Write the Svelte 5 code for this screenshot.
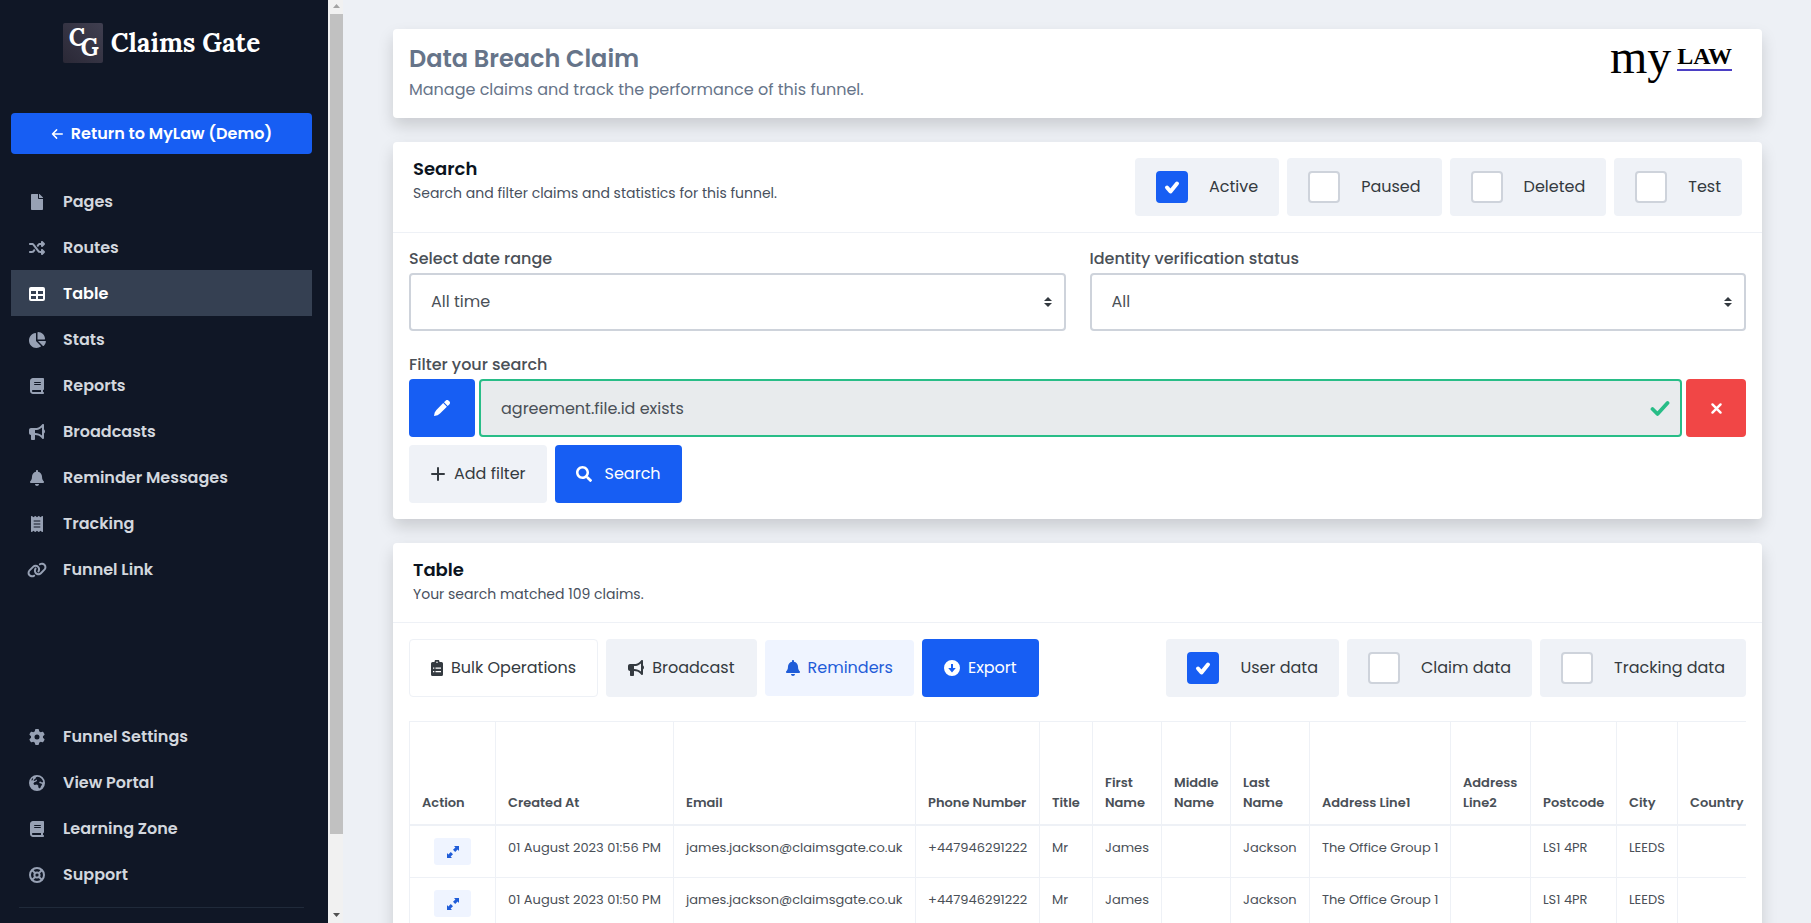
<script lang="ts">
  type Icon = { box: string; fill?: string; line?: string; width?: number };

  const icons: Record<string, Icon> = {
    file: { box: '0 0 384 512', fill: 'M224 136V0H24C10.7 0 0 10.7 0 24v464c0 13.3 10.7 24 24 24h336c13.3 0 24-10.7 24-24V160H248c-13.2 0-24-10.8-24-24zm160-14.1v6.1H256V0h6.1c6.4 0 12.5 2.5 17 7l97.9 98c4.5 4.5 7 10.6 7 16.9z' },
    shuffle: { box: '0 0 512 512', fill: 'M403.8 34.4c12-5 25.7-2.2 34.9 6.9l64 64c6 6 9.4 14.1 9.4 22.6s-3.4 16.6-9.4 22.6l-64 64c-9.2 9.2-22.9 11.9-34.9 6.9s-19.8-16.6-19.8-29.6V160H352c-10.1 0-19.6 4.7-25.6 12.8L284 229.3 244 176l31.2-41.6C293.3 110.2 321.8 96 352 96h32V64c0-12.9 7.8-24.6 19.8-29.6zM164 282.7L204 336l-31.2 41.6C154.7 401.8 126.2 416 96 416H32c-17.7 0-32-14.3-32-32s14.3-32 32-32H96c10.1 0 19.6-4.7 25.6-12.8L164 282.7zm274.6 188c-9.2 9.2-22.9 11.9-34.9 6.9s-19.8-16.6-19.8-29.6V416H352c-30.2 0-58.7-14.2-76.8-38.4L121.6 172.8c-6-8.1-15.5-12.8-25.6-12.8H32c-17.7 0-32-14.3-32-32s14.3-32 32-32H96c30.2 0 58.7 14.2 76.8 38.4L326.4 339.2c6 8.1 15.5 12.8 25.6 12.8h32V320c0-12.9 7.8-24.6 19.8-29.6s25.7-2.2 34.9 6.9l64 64c6 6 9.4 14.1 9.4 22.6s-3.4 16.6-9.4 22.6l-64 64z' },
    table: { box: '0 0 16 16', fill: 'M2 1h12a2 2 0 0 1 2 2v10a2 2 0 0 1-2 2H2a2 2 0 0 1-2-2V3a2 2 0 0 1 2-2zM2 5v3h5V5zM9 5v3h5V5zM2 10v3h5v-3zM9 10v3h5v-3z' },
    pie: { box: '0 0 576 512', fill: 'M304 240V16.6c0-9 7-16.6 16-16.6C443.7 0 544 100.3 544 224c0 9-7.6 16-16.6 16H304zM32 272C32 150.7 122.1 50.3 239 34.3c9.2-1.3 17 6.1 17 15.4V288L412.5 444.5c6.7 6.7 6.2 17.7-1.5 23.1C371.8 495.6 323.8 512 272 512C139.5 512 32 404.6 32 272zm526.4 16c9.3 0 16.6 7.8 15.4 17c-7.7 55.9-34.6 105.6-73.9 142.3c-6 5.6-15.4 5.2-21.2-.7L320 288H558.4z' },
    book: { box: '0 0 448 512', fill: 'M96 0C43 0 0 43 0 96V416c0 53 43 96 96 96H384h32c17.7 0 32-14.3 32-32s-14.3-32-32-32V384c17.7 0 32-14.3 32-32V32c0-17.7-14.3-32-32-32H384 96zm0 384H352v64H96c-17.7 0-32-14.3-32-32s14.3-32 32-32zm32-240c0-8.8 7.2-16 16-16H336c8.8 0 16 7.2 16 16s-7.2 16-16 16H144c-8.8 0-16-7.2-16-16zm16 48H336c8.8 0 16 7.2 16 16s-7.2 16-16 16H144c-8.8 0-16-7.2-16-16s7.2-16 16-16z' },
    bullhorn: { box: '0 0 512 512', fill: 'M480 32c0-12.9-7.8-24.6-19.8-29.6s-25.7-2.2-34.9 6.9L381.7 53c-48 48-113.1 75-181 75H192 160 64c-35.3 0-64 28.7-64 64v96c0 35.3 28.7 64 64 64l0 128c0 17.7 14.3 32 32 32h64c17.7 0 32-14.3 32-32V352l8.7 0c67.9 0 133 27 181 75l43.6 43.6c9.2 9.2 22.9 11.9 34.9 6.9s19.8-16.6 19.8-29.6V300.4c18.6-8.8 32-32.5 32-60.4s-13.4-51.6-32-60.4V32zm-64 76.7V240 371.3C357.2 317.8 280.5 288 200.7 288H192V192h8.7c79.8 0 156.5-29.8 215.3-83.3z' },
    bell: { box: '0 0 448 512', fill: 'M224 512c35.32 0 63.97-28.65 63.97-64H160.03c0 35.35 28.65 64 63.97 64zm215.39-149.71c-19.32-20.76-55.47-51.99-55.47-154.29 0-77.7-54.48-139.9-127.94-155.16V32c0-17.67-14.32-32-31.98-32s-31.98 14.33-31.98 32v20.84C118.56 68.1 64.08 130.3 64.08 208c0 102.3-36.15 133.53-55.47 154.29-6 6.45-8.66 14.16-8.61 21.71.11 16.4 12.98 32 32.1 32h383.8c19.12 0 32-15.6 32.1-32 .05-7.55-2.61-15.27-8.61-21.71z' },
    receipt: { box: '0 0 384 512', fill: 'M14 2.2C22.5-1.7 32.5-.3 39.6 5.8L80 40.4 120.4 5.8c9-7.7 22.3-7.7 31.2 0L192 40.4 232.4 5.8c9-7.7 22.3-7.7 31.2 0L304 40.4 344.4 5.8c7.1-6.1 17.1-7.5 25.6-3.6s14 12.4 14 21.8V488c0 9.4-5.5 17.9-14 21.8s-18.5 2.5-25.6-3.6L304 471.6l-40.4 34.6c-9 7.7-22.3 7.7-31.2 0L192 471.6l-40.4 34.6c-9 7.7-22.3 7.7-31.2 0L80 471.6 39.6 506.2c-7.1 6.1-17.1 7.5-25.6 3.6S0 497.4 0 488V24C0 14.6 5.5 6.1 14 2.2zM96 144c-8.8 0-16 7.2-16 16s7.2 16 16 16H288c8.8 0 16-7.2 16-16s-7.2-16-16-16H96zM80 352c0 8.8 7.2 16 16 16H288c8.8 0 16-7.2 16-16s-7.2-16-16-16H96c-8.8 0-16 7.2-16 16zM96 240c-8.8 0-16 7.2-16 16s7.2 16 16 16H288c8.8 0 16-7.2 16-16s-7.2-16-16-16H96z' },
    link: { box: '0 0 640 512', fill: 'M579.8 267.7c56.5-56.5 56.5-148 0-204.5c-50-50-128.8-56.5-186.3-15.4l-1.6 1.1c-14.4 10.3-17.7 30.3-7.4 44.6s30.3 17.7 44.6 7.4l1.6-1.1c32.1-22.9 76-19.3 103.8 8.6c31.5 31.5 31.5 82.5 0 114L422.3 334.8c-31.5 31.5-82.5 31.5-114 0c-27.9-27.9-31.5-71.8-8.6-103.8l1.1-1.6c10.3-14.4 6.9-34.4-7.4-44.6s-34.4-6.9-44.6 7.4l-1.1 1.6C206.5 251.2 213 330 263 380c56.5 56.5 148 56.5 204.5 0L579.8 267.7zM60.2 244.3c-56.5 56.5-56.5 148 0 204.5c50 50 128.8 56.5 186.3 15.4l1.6-1.1c14.4-10.3 17.7-30.3 7.4-44.6s-30.3-17.7-44.6-7.4l-1.6 1.1c-32.1 22.9-76 19.3-103.8-8.6C74 372 74 321 105.5 289.5L217.7 177.2c31.5-31.5 82.5-31.5 114 0c27.9 27.9 31.5 71.8 8.6 103.9l-1.1 1.6c-10.3 14.4-6.9 34.4 7.4 44.6s34.4 6.9 44.6-7.4l1.1-1.6C433.5 260.8 427 182 377 132c-56.5-56.5-148-56.5-204.5 0L60.2 244.3z' },
    gear: { box: '0 0 512 512', fill: 'M495.9 166.6c3.2 8.7 .5 18.4-6.4 24.6l-43.3 39.4c1.1 8.3 1.7 16.8 1.7 25.4s-.6 17.1-1.7 25.4l43.3 39.4c6.9 6.2 9.6 15.9 6.4 24.6c-4.4 11.9-9.7 23.3-15.8 34.3l-4.7 8.1c-6.6 11-14 21.4-22.1 31.2c-5.9 7.2-15.7 9.6-24.5 6.8l-55.7-17.7c-13.4 10.3-28.2 18.9-44 25.4l-12.5 57.1c-2 9.1-9 16.3-18.2 17.8c-13.8 2.3-28 3.5-42.5 3.5s-28.7-1.2-42.5-3.5c-9.2-1.5-16.2-8.7-18.2-17.8l-12.5-57.1c-15.8-6.5-30.6-15.1-44-25.4L83.1 425.9c-8.8 2.8-18.6 .3-24.5-6.8c-8.1-9.8-15.5-20.2-22.1-31.2l-4.7-8.1c-6.1-11-11.4-22.4-15.8-34.3c-3.2-8.7-.5-18.4 6.4-24.6l43.3-39.4C64.6 273.1 64 264.6 64 256s.6-17.1 1.7-25.4L22.4 191.2c-6.9-6.2-9.6-15.9-6.4-24.6c4.4-11.9 9.7-23.3 15.8-34.3l4.7-8.1c6.6-11 14-21.4 22.1-31.2c5.9-7.2 15.7-9.6 24.5-6.8l55.7 17.7c13.4-10.3 28.2-18.9 44-25.4l12.5-57.1c2-9.1 9-16.3 18.2-17.8C227.3 1.2 241.5 0 256 0s28.7 1.2 42.5 3.5c9.2 1.5 16.2 8.7 18.2 17.8l12.5 57.1c15.8 6.5 30.6 15.1 44 25.4l55.7-17.7c8.8-2.8 18.6-.3 24.5 6.8c8.1 9.8 15.5 20.2 22.1 31.2l4.7 8.1c6.1 11 11.4 22.4 15.8 34.3zM256 336a80 80 0 1 0 0-160 80 80 0 1 0 0 160z' },
    globe: { box: '0 0 16 16', fill: 'M8 0a8 8 0 1 1 0 16A8 8 0 0 1 8 0zM8.6 1.7 7 2.3 6.6 3.6 5.2 4.4 4.6 6l1.6-.2 1-1.4.9.9-.8 1.2-2 .8-.9 1.5 1 1.2L8 9.6l1.4 1.2-.2 1.2 1 1.4 1.4-.8.4-1.6 1.2-1.2-.9-1.4-1.6-.2-.6-1.2 1.4-.4 1.5.8 1.2-.4A6.6 6.6 0 0 0 8.6 1.7zM3.6 2.9 2.2 5.2l1 .2 1-1.4z' },
    ring: { box: '0 0 16 16', line: 'M8 1a7 7 0 1 1 0 14A7 7 0 0 1 8 1zM8 5.4a2.6 2.6 0 1 1 0 5.2 2.6 2.6 0 0 1 0-5.2zM3 3l3.1 3.1M13 3 9.9 6.1M3 13l3.1-3.1M13 13 9.9 9.9', width: 2 },
    back: { box: '0 0 16 16', line: 'M15 8H2M7.5 2.5 2 8l5.5 5.5', width: 2 },
    pencil: { box: '0 0 16 16', fill: 'M10 2.3 11.6.7a2.2 2.2 0 0 1 3.1 0l.6.6a2.2 2.2 0 0 1 0 3.1L13.7 6zM9.2 3.1 12.9 6.8 6 13.6 3.6 15.3 0 16l.7-3.6L2.4 10z' },
    plus: { box: '0 0 16 16', line: 'M8 2v12M2 8h12', width: 2 },
    cross: { box: '0 0 16 16', line: 'M3 3l10 10M13 3 3 13', width: 3 },
    search: { box: '0 0 512 512', fill: 'M505 442.7L405.3 343c-4.5-4.5-10.6-7-17-7H372c27.6-35.3 44-79.7 44-128C416 93.1 322.9 0 208 0S0 93.1 0 208s93.1 208 208 208c48.3 0 92.7-16.4 128-44v16.3c0 6.4 2.5 12.5 7 17l99.7 99.7c9.4 9.4 24.6 9.4 33.9 0l28.3-28.3c9.4-9.4 9.4-24.6.1-34zM208 336c-70.7 0-128-57.2-128-128 0-70.7 57.2-128 128-128 70.7 0 128 57.2 128 128 0 70.7-57.2 128-128 128z' },
    clipboard: { box: '0 0 12 16', fill: 'M1.5 2H3.5a2.5 2.5 0 0 1 5 0h2A1.5 1.5 0 0 1 12 3.5v11a1.5 1.5 0 0 1-1.5 1.5h-9A1.5 1.5 0 0 1 0 14.5v-11A1.5 1.5 0 0 1 1.5 2zM6 1.5a.8.8 0 1 0 0 1.6.8.8 0 0 0 0-1.6zM2 7.5v1.2h1.3V7.5zM4.5 7.5v1.2H10V7.5zM2 11v1.2h1.3V11zM4.5 11v1.2H10V11z' },
    download: { box: '0 0 16 16', fill: 'M8 0a8 8 0 1 1 0 16A8 8 0 0 1 8 0zM7 4v4H4.2L8 12.5 11.8 8H9V4z' },
    expand: { box: '0 0 12 12', fill: 'M7 0h5v5L10.6 3.6 8.2 6 6 3.8 8.4 1.4zM5 12H0V7l1.4 1.4L3.8 6 6 8.2 3.6 10.6z' },
    check: { box: '0 0 16 16', line: 'M2 8.8 6 12.8 14 4', width: 3 },
    tick: { box: '0 0 16 16', line: 'M3 8.5 6.5 12.5 13 4.5', width: 4 },
    sort: { box: '0 0 8 10', fill: 'M0 4 4 0l4 4zM0 6h8L4 10z' }
  };

  const mainNav = [
    { icon: 'file', label: 'Pages' },
    { icon: 'shuffle', label: 'Routes' },
    { icon: 'table', label: 'Table', active: true },
    { icon: 'pie', label: 'Stats' },
    { icon: 'book', label: 'Reports' },
    { icon: 'bullhorn', label: 'Broadcasts' },
    { icon: 'bell', label: 'Reminder Messages' },
    { icon: 'receipt', label: 'Tracking' },
    { icon: 'link', label: 'Funnel Link' }
  ];

  const footNav = [
    { icon: 'gear', label: 'Funnel Settings' },
    { icon: 'globe', label: 'View Portal' },
    { icon: 'book', label: 'Learning Zone' },
    { icon: 'ring', label: 'Support' }
  ];

  let statuses = $state([
    { label: 'Active', on: true },
    { label: 'Paused', on: false },
    { label: 'Deleted', on: false },
    { label: 'Test', on: false }
  ]);

  let dataSets = $state([
    { label: 'User data', on: true },
    { label: 'Claim data', on: false },
    { label: 'Tracking data', on: false }
  ]);

  let dateRange = $state('All time');
  let idStatus = $state('All');

  const columns = [
    { label: 'Action', width: 86 },
    { label: 'Created At', width: 178 },
    { label: 'Email', width: 242 },
    { label: 'Phone Number', width: 124 },
    { label: 'Title', width: 53 },
    { label: 'First Name', width: 69 },
    { label: 'Middle Name', width: 69 },
    { label: 'Last Name', width: 79 },
    { label: 'Address Line1', width: 141 },
    { label: 'Address Line2', width: 80 },
    { label: 'Postcode', width: 86 },
    { label: 'City', width: 61 },
    { label: 'Country', width: 84 }
  ];

  const person = ['james.jackson@claimsgate.co.uk', '+447946291222', 'Mr', 'James', '', 'Jackson', 'The Office Group 1', '', 'LS1 4PR', 'LEEDS', ''];
  const rows = [
    ['01 August 2023 01:56 PM', ...person],
    ['01 August 2023 01:50 PM', ...person]
  ];
</script>

{#snippet icon(name: string)}
  <svg class="icon icon-{name}" viewBox={icons[name].box} aria-hidden="true">
    {#if icons[name].fill}
      <path d={icons[name].fill} fill="currentColor" fill-rule="evenodd" />
    {/if}
    {#if icons[name].line}
      <path d={icons[name].line} fill="none" stroke="currentColor" stroke-width={icons[name].width} stroke-linecap="round" stroke-linejoin="round" />
    {/if}
  </svg>
{/snippet}

{#snippet navList(items: { icon: string; label: string; active?: boolean }[])}
  <ul class="nav-list">
    {#each items as item}
      <li>
        <a href="#{item.icon}" class="nav-link" class:active={item.active}>
          <span class="nav-icon">{@render icon(item.icon)}</span>
          {item.label}
        </a>
      </li>
    {/each}
  </ul>
{/snippet}

{#snippet toggles(items: { label: string; on: boolean }[])}
  <div class="toggles">
    {#each items as item}
      <label class="toggle">
        <span class="tick">
          <input type="checkbox" bind:checked={item.on} />
          {#if item.on}{@render icon('tick')}{/if}
        </span>
        {item.label}
      </label>
    {/each}
  </div>
{/snippet}

<div class="shell">
  <aside class="sidebar">
    <a href="#home" class="brand">
      <span class="brand-mark"><span class="mark-c">C</span><span class="mark-g">G</span></span>
      <span class="brand-name">Claims Gate</span>
    </a>
    <a href="#return" class="return-btn">{@render icon('back')} Return to MyLaw (Demo)</a>
    <nav class="main-nav" aria-label="Funnel">{@render navList(mainNav)}</nav>
    <nav class="foot-nav" aria-label="Settings">
      {@render navList(footNav)}
      <hr />
    </nav>
  </aside>

  <div class="scrollbar" aria-hidden="true">
    <svg class="scroll-arrow up" viewBox="0 0 15 14"><path d="M8.5 4 12 8H5z" /></svg>
    <div class="thumb"></div>
    <div class="track"></div>
    <svg class="scroll-arrow" viewBox="0 0 15 14"><path d="M5 4h7L8.5 8z" /></svg>
  </div>

  <main>
    <section class="card intro">
      <div>
        <h1>Data Breach Claim</h1>
        <p>Manage claims and track the performance of this funnel.</p>
      </div>
      <div class="client-logo"><span class="logo-my">my</span><span class="logo-law">LAW</span></div>
    </section>

    <section class="card">
      <header class="card-head">
        <div>
          <h2>Search</h2>
          <p>Search and filter claims and statistics for this funnel.</p>
        </div>
        {@render toggles(statuses)}
      </header>
      <div class="search-body">
        <div class="select-row">
          <div class="field">
            <label for="date-range">Select date range</label>
            <div class="select-wrap">
              <select id="date-range" bind:value={dateRange}>
                <option>All time</option>
                <option>Last 7 days</option>
                <option>Last 30 days</option>
              </select>
              {@render icon('sort')}
            </div>
          </div>
          <div class="field">
            <label for="id-status">Identity verification status</label>
            <div class="select-wrap">
              <select id="id-status" bind:value={idStatus}>
                <option>All</option>
                <option>Verified</option>
                <option>Unverified</option>
              </select>
              {@render icon('sort')}
            </div>
          </div>
        </div>
        <div class="field">
          <label for="filter">Filter your search</label>
          <div class="filter-row">
            <button class="btn primary edit" aria-label="Edit filter">{@render icon('pencil')}</button>
            <div class="filter-wrap">
              <input id="filter" type="text" value="agreement.file.id exists" readonly />
              {@render icon('check')}
            </div>
            <button class="btn danger" aria-label="Remove filter">{@render icon('cross')}</button>
          </div>
        </div>
        <div class="actions">
          <button class="btn light add">{@render icon('plus')} Add filter</button>
          <button class="btn primary find">{@render icon('search')} Search</button>
        </div>
      </div>
    </section>

    <section class="card">
      <header class="card-head">
        <div>
          <h2>Table</h2>
          <p>Your search matched 109 claims.</p>
        </div>
      </header>
      <div class="table-body">
        <div class="toolbar">
          <div class="actions">
            <button class="btn outline">{@render icon('clipboard')} Bulk Operations</button>
            <button class="btn light">{@render icon('bullhorn')} Broadcast</button>
            <button class="btn soft">{@render icon('bell')} Reminders</button>
            <button class="btn primary">{@render icon('download')} Export</button>
          </div>
          {@render toggles(dataSets)}
        </div>
        <div class="table-scroll">
          <table>
            <colgroup>
              {#each columns as col}
                <col style="width: {col.width}px" />
              {/each}
            </colgroup>
            <thead>
              <tr>
                {#each columns as col}
                  <th scope="col">{col.label}</th>
                {/each}
              </tr>
            </thead>
            <tbody>
              {#each rows as row}
                <tr>
                  <td class="action-cell"><button class="open-btn" aria-label="Open claim">{@render icon('expand')}</button></td>
                  {#each row as cell}
                    <td>{cell}</td>
                  {/each}
                </tr>
              {/each}
            </tbody>
          </table>
        </div>
      </div>
    </section>
  </main>
</div>

<style>
  :global(body) {
    background: #edf0f5;
  }

  .shell {
    display: grid;
    grid-template-columns: 328px 15px minmax(0, 1fr);
    grid-template-rows: 100vh;
    overflow: hidden;
    font-family: Poppins, Inter, sans-serif;
    font-size: 16px;
    line-height: 24px;
    color: #4a5057;
  }

  h1, h2, p, ul {
    margin: 0;
    padding: 0;
  }

  button, input, select {
    font: inherit;
    color: inherit;
    margin: 0;
  }

  .icon {
    height: 16px;
    flex-shrink: 0;
  }

  /* Sidebar */
  .sidebar {
    display: flex;
    flex-direction: column;
    box-sizing: border-box;
    padding: 23px 16px 15px 11px;
    background: #101726;
    overflow: hidden;
  }

  .brand {
    display: flex;
    align-items: center;
    justify-content: center;
    gap: 8px;
    height: 40px;
    margin-bottom: 50px;
    color: #fff;
    text-decoration: none;
    font-family: Lora, 'Liberation Serif', serif;
    font-weight: 700;
  }

  .brand-mark {
    display: grid;
    grid-template-columns: 12px 16px;
    justify-content: center;
    width: 40px;
    height: 40px;
    border-radius: 2px;
    background: linear-gradient(45deg, #2a2836, #403f50);
    font-size: 24px;
    line-height: 24px;
  }

  .mark-c {
    padding-top: 3px;
  }

  .mark-g {
    padding-top: 13px;
  }

  .brand-name {
    font-size: 26px;
    line-height: 40px;
  }

  .return-btn {
    display: flex;
    align-items: center;
    justify-content: center;
    gap: 8px;
    height: 41px;
    margin-bottom: 24px;
    border-radius: 4px;
    background: #175ef3;
    color: #fff;
    font-weight: 600;
    text-decoration: none;
  }

  .return-btn .icon {
    height: 12px;
  }

  .nav-list {
    list-style: none;
  }

  .nav-link {
    display: flex;
    align-items: center;
    gap: 14px;
    box-sizing: border-box;
    height: 46px;
    padding: 2px 0 0 14px;
    color: #d3d7de;
    font-weight: 600;
    text-decoration: none;
  }

  .nav-link.active {
    background: #354052;
    color: #fff;
  }

  .nav-icon {
    display: flex;
    justify-content: center;
    width: 24px;
    color: #97a1b4;
  }

  .active .nav-icon {
    color: #fff;
  }

  .foot-nav {
    margin-top: auto;
  }

  hr {
    margin: 10px 8px 0;
    border: 0;
    border-top: 1px solid #202a3a;
  }

  .scrollbar {
    display: flex;
    flex-direction: column;
    background: #f1f1f1;
  }

  .scroll-arrow {
    height: 14px;
    fill: #505050;
  }

  .scroll-arrow.up {
    fill: #a3a3a3;
  }

  .thumb {
    flex: 820;
    margin-left: 2px;
    background: #c1c1c1;
  }

  .track {
    flex: 75;
  }

  /* Cards */
  main {
    display: flex;
    flex-direction: column;
    gap: 24px;
    padding: 29px 49px 0 50px;
  }

  .card {
    border-radius: 4px;
    background: #fff;
    box-shadow: 0 8px 16px rgba(0, 0, 0, 0.15);
  }

  .intro {
    display: flex;
    justify-content: space-between;
    padding: 14px 30px 16px 16px;
    color: #667489;
  }

  h1 {
    margin-bottom: 3px;
    font-size: 24px;
    line-height: 32px;
    font-weight: 600;
  }

  .client-logo {
    display: flex;
    align-items: flex-start;
    gap: 6px;
    color: #000;
    font-family: 'Liberation Serif', serif;
  }

  .logo-my {
    font-size: 48px;
    line-height: 28px;
  }

  .logo-law {
    border-bottom: 2px solid #4b3fc4;
    font-size: 24px;
    line-height: 26px;
    font-weight: 700;
  }

  .card-head {
    display: flex;
    justify-content: space-between;
    padding: 16px 20px;
    border-bottom: 1px solid #eef1f6;
  }

  h2 {
    color: #0b1320;
    font-size: 18px;
    line-height: 22px;
    font-weight: 600;
  }

  .card-head p {
    padding-top: 1px;
    color: #474f5d;
    font-size: 14px;
  }

  .toggles {
    display: flex;
    gap: 8px;
  }

  .toggle {
    display: flex;
    align-items: center;
    gap: 21px;
    height: 58px;
    padding: 0 21px;
    border-radius: 4px;
    background: #eff2f7;
    color: #343a40;
  }

  .tick {
    display: grid;
    place-items: center;
  }

  .tick input {
    grid-area: 1 / 1;
    appearance: none;
    box-sizing: border-box;
    width: 32px;
    height: 32px;
    border: 2px solid #ced3db;
    border-radius: 4px;
    background: #fff;
  }

  .tick input:checked {
    border-color: #175ef3;
    background: #175ef3;
  }

  .tick .icon {
    grid-area: 1 / 1;
    color: #fff;
    pointer-events: none;
  }

  .search-body {
    display: flex;
    flex-direction: column;
    padding: 14px 16px 16px;
  }

  .select-row {
    display: grid;
    grid-template-columns: 1fr 1fr;
    gap: 24px;
    margin-bottom: 22px;
  }

  .field {
    display: flex;
    flex-direction: column;
    gap: 2px;
  }

  .field label {
    font-weight: 500;
  }

  .select-wrap,
  .filter-wrap {
    position: relative;
    flex: 1;
  }

  select,
  .filter-wrap input {
    appearance: none;
    display: block;
    box-sizing: border-box;
    width: 100%;
    height: 58px;
    padding: 0 20px;
    border: 2px solid #ced3db;
    border-radius: 4px;
    background: #fff;
  }

  .select-wrap .icon {
    position: absolute;
    top: 24px;
    right: 14px;
    height: 10px;
    color: #343a40;
    pointer-events: none;
  }

  .filter-wrap input {
    border-color: #28bd87;
    background: #e8ebed;
  }

  .filter-wrap .icon {
    position: absolute;
    top: 19px;
    right: 12px;
    height: 20px;
    color: #28bd87;
  }

  .filter-row {
    display: flex;
    gap: 4px;
  }

  .search-body > .actions {
    margin-top: 8px;
  }

  .actions {
    display: flex;
    align-items: center;
    gap: 8px;
  }

  .btn {
    display: flex;
    align-items: center;
    gap: 8px;
    height: 58px;
    padding: 0 22px;
    border: 0;
    border-radius: 4px;
  }

  .primary {
    background: #175ef3;
    color: #fff;
  }

  .light {
    background: #eff2f7;
    color: #343a40;
  }

  .outline {
    border: 1px solid #eef1f6;
    background: #fff;
    color: #343a40;
    padding: 0 21px;
  }

  .soft {
    height: 56px;
    padding: 0 21px;
    background: #eff4ff;
    color: #1f5cd8;
  }

  .danger {
    width: 60px;
    justify-content: center;
    background: #f14646;
    color: #fff;
  }

  .danger .icon {
    height: 13px;
  }

  .edit {
    width: 66px;
    justify-content: center;
  }

  .add,
  .find {
    padding: 0 21px;
  }

  .find {
    gap: 13px;
  }

  .table-body {
    padding: 16px;
  }

  .toolbar {
    display: flex;
    justify-content: space-between;
    margin-bottom: 24px;
  }

  .table-scroll {
    overflow: hidden;
  }

  table {
    table-layout: fixed;
    width: 1352px;
    border-collapse: separate;
    border-spacing: 0;
    border-top: 1px solid #eef1f6;
    border-left: 1px solid #eef1f6;
    font-size: 13px;
    line-height: 20px;
  }

  th, td {
    box-sizing: border-box;
    padding: 12px;
    border-right: 1px solid #eef1f6;
    border-bottom: 1px solid #eef1f6;
    text-align: left;
    vertical-align: top;
    white-space: nowrap;
  }

  th {
    height: 104px;
    padding-bottom: 11px;
    border-bottom-width: 2px;
    font-weight: 600;
    vertical-align: bottom;
    white-space: normal;
  }

  .action-cell {
    text-align: center;
  }

  .open-btn {
    display: inline-flex;
    align-items: center;
    justify-content: center;
    width: 37px;
    height: 27px;
    padding: 0;
    border: 0;
    border-radius: 3px;
    background: #eff4ff;
    color: #1f5cd8;
    vertical-align: top;
  }

  .open-btn .icon {
    height: 12px;
  }
</style>
